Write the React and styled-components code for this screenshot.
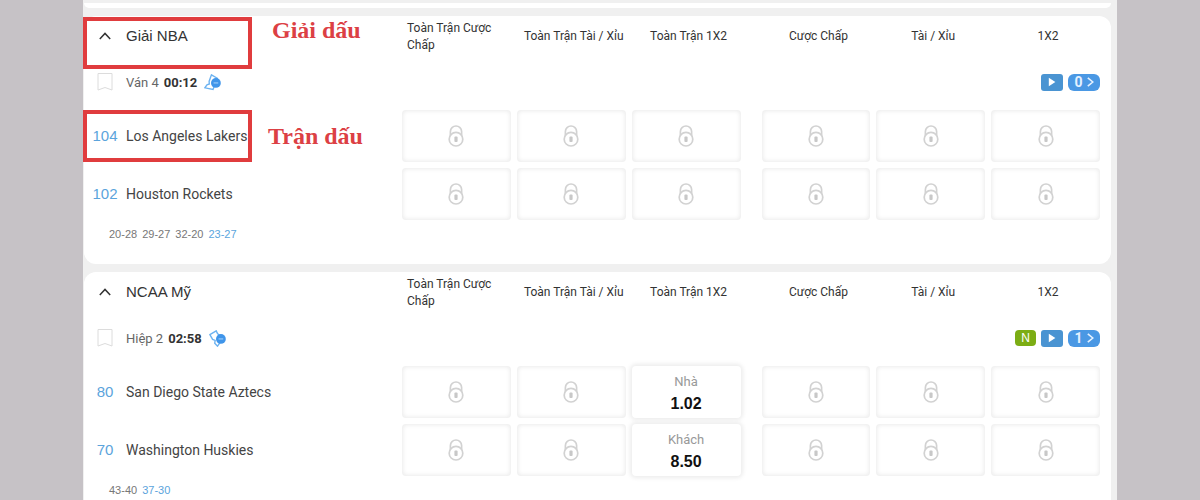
import styled, { createGlobalStyle } from "styled-components";

const COLUMNS = [
	["Toàn Trận Cược Chấp", "Toàn Trận Tài / Xỉu", "Toàn Trận 1X2"],
	["Cược Chấp", "Tài / Xỉu", "1X2"],
];

const LEAGUES = [
	{
		name: "Giải NBA",
		note: "Giải dấu",
		period: "Ván 4",
		clock: "00:12",
		ticket: "up",
		neutral: false,
		more: 0,
		teams: [
			{ points: 104, name: "Los Angeles Lakers", note: "Trận dấu", odds: {} },
			{ points: 102, name: "Houston Rockets", odds: {} },
		],
		scores: ["20-28", "29-27", "32-20", "23-27"],
	},
	{
		name: "NCAA Mỹ",
		period: "Hiệp 2",
		clock: "02:58",
		ticket: "down",
		neutral: true,
		more: 1,
		teams: [
			{ points: 80, name: "San Diego State Aztecs", odds: { "Toàn Trận 1X2": ["Nhà", "1.02"] } },
			{ points: 70, name: "Washington Huskies", odds: { "Toàn Trận 1X2": ["Khách", "8.50"] } },
		],
		scores: ["43-40", "37-30"],
	},
];

const ChevronUp = () => (
	<svg width="12" height="8" viewBox="0 0 12 8" fill="none" stroke="#333" strokeWidth="1.5">
		<path d="M0.8 7 L6 1.4 L11.2 7" />
	</svg>
);

const Bookmark = () => (
	<svg width="16" height="18" viewBox="0 0 16 18" fill="none" stroke="#dcdcdc">
		<path d="M1 0.5 H15 V17 L8 14.5 L1 17 Z" />
	</svg>
);

const Ticket = ({ direction }) => (
	<svg width="17" height="17" viewBox="0 0 16 16" fill="none" stroke="#6cb2f0" strokeWidth="1.3">
		{direction === "up" ? (
			<path d="M7 0.8 L12.5 4 L8.5 14.6 L0.8 13 L2.8 10.2 L5 9.4 L4.8 7 Z" />
		) : (
			<path d="M0.8 4.4 L6.8 0.8 L8 3.4 L13 8 L8 15.2 L5.4 12.4 L5.8 9.8 L3.4 8.8 Z" />
		)}
		<circle cx="11.2" cy="8.4" r="4.6" fill="#3f95ea" stroke="none" />
		<path d="M9 8.4 H13.4" stroke="#8cc3f7" strokeWidth="1.3" />
	</svg>
);

const Lock = () => (
	<svg width="16" height="22" viewBox="0 0 16 22" fill="none" stroke="#d2d2d2" strokeWidth="1.7">
		<path d="M2.4 10.5 V6.4 A5.6 5.4 0 0 1 13.6 6.4 V10.5" />
		<circle cx="8" cy="14.2" r="6.8" />
		<rect x="6.4" y="11.4" width="3.2" height="5.6" rx="1" fill="#c8c8c8" stroke="none" />
	</svg>
);

const Market = ({ label, team, odds }) =>
	odds ? (
		<LiveOdds type="button" aria-label={`${team} ${label}`}>
			<OddsSide>{odds[0]}</OddsSide>
			<OddsValue>{odds[1]}</OddsValue>
		</LiveOdds>
	) : (
		<LockedOdds type="button" disabled aria-label={`${team} ${label}`}>
			<Lock />
		</LockedOdds>
	);

const League = ({ league }) => (
	<Card>
		<Row>
			<Info>
				<Toggle type="button" aria-label={league.name} aria-expanded="true">
					<ChevronUp />
				</Toggle>
				<LeagueName>{league.name}</LeagueName>
			</Info>
			<Markets>
				{COLUMNS.map((group) => (
					<Group key={group[0]}>
						{group.map((label) => (
							<ColumnTitle key={label}>
								<span>{label}</span>
							</ColumnTitle>
						))}
					</Group>
				))}
			</Markets>
			{league.note && (
				<Marker $top="1px">
					<Note>{league.note}</Note>
				</Marker>
			)}
		</Row>

		<StatusRow>
			<Toggle type="button" aria-label="Bookmark">
				<Bookmark />
			</Toggle>
			<Period>
				{league.period}
				<strong>{league.clock}</strong>
			</Period>
			<Ticket direction={league.ticket} />
			<Badges>
				{league.neutral && <NeutralBadge>N</NeutralBadge>}
				<PlayButton type="button" aria-label="Play">
					<svg width="8" height="10" viewBox="0 0 8 10" fill="#fff">
						<path d="M0.8 0.8 L7.4 5 L0.8 9.2 Z" />
					</svg>
				</PlayButton>
				<MoreButton type="button">
					{league.more}
					<svg width="7" height="10" viewBox="0 0 7 10" fill="none" stroke="#e4f1ff" strokeWidth="1.6">
						<path d="M0.8 0.8 L5.8 5 L0.8 9.2" />
					</svg>
				</MoreButton>
			</Badges>
		</StatusRow>

		<Teams>
			{league.teams.map((team) => (
				<Row key={team.name}>
					<Info>
						<Points>{team.points}</Points>
						<TeamName>{team.name}</TeamName>
					</Info>
					<Markets>
						{COLUMNS.map((group) => (
							<Group key={group[0]}>
								{group.map((label) => (
									<Market key={label} label={label} team={team.name} odds={team.odds[label]} />
								))}
							</Group>
						))}
					</Markets>
					{team.note && (
						<Marker $top="0">
							<Note $low>{team.note}</Note>
						</Marker>
					)}
				</Row>
			))}
		</Teams>

		<Scores>
			{league.scores.map((score, i) => (
				<Score key={score} $current={i === league.scores.length - 1}>
					{score}
				</Score>
			))}
		</Scores>
	</Card>
);

const App = () => (
	<>
		<GlobalStyle />
		<Page>
			<PreviousCard />
			{LEAGUES.map((league) => (
				<League key={league.name} league={league} />
			))}
		</Page>
	</>
);

const GlobalStyle = createGlobalStyle`
	* {
		box-sizing: border-box;
	}
	body {
		margin: 0;
		padding: 0 83px;
		background: #c6c2c6;
		font-family: "Liberation Sans", Arial, sans-serif;
	}
	button {
		font-family: inherit;
		border: none;
		padding: 0;
		cursor: pointer;
	}
	svg {
		flex: none;
		display: block;
	}
`;

const Page = styled.main`
	display: flex;
	flex-direction: column;
	gap: 8px;
	min-height: 100vh;
	padding: 3px 6px 8px 1px;
	background: #f0f0f0;
`;

const PreviousCard = styled.div`
	height: 5px;
	background: #fff;
	border-radius: 0 0 12px 12px;
`;

const Card = styled.section`
	padding: 0 11px 16px 0;
	background: #fff;
	border-radius: 12px;
`;

const Row = styled.div`
	position: relative;
	display: flex;
	min-height: 40px;
`;

const Info = styled.div`
	display: flex;
	align-items: center;
	width: 318px;
	flex: none;
	padding-bottom: 1px;
`;

const Toggle = styled.button`
	display: flex;
	justify-content: center;
	width: 42px;
	flex: none;
	background: none;
`;

const LeagueName = styled.h2`
	margin: 0;
	font-size: 15px;
	font-weight: 400;
	color: #333;
`;

const Markets = styled.div`
	flex: 1;
	display: grid;
	grid-template-columns: 1fr 1fr;
	gap: 21px;
`;

const Group = styled.div`
	display: grid;
	grid-template-columns: repeat(3, 1fr);
	gap: 6px;
`;

const ColumnTitle = styled.div`
	display: flex;
	align-items: center;
	justify-content: center;
	padding: 1px 0 0 5px;
	font-family: Roboto, sans-serif;
	font-size: 12px;
	line-height: 17px;
	color: #333;
`;

const StatusRow = styled.div`
	display: flex;
	align-items: center;
	height: 54px;
	padding-bottom: 2px;
`;

const Period = styled.span`
	display: flex;
	gap: 5px;
	margin-right: 7px;
	font-family: Roboto, sans-serif;
	font-size: 13px;
	color: #666;

	strong {
		color: #333;
	}
`;

const Badges = styled.div`
	display: flex;
	align-items: center;
	gap: 5px;
	margin-left: auto;
`;

const NeutralBadge = styled.span`
	width: 21px;
	border-radius: 4px;
	background: #7cad14;
	color: #fff;
	font-size: 12px;
	line-height: 16px;
	text-align: center;
`;

const PlayButton = styled.button`
	display: flex;
	align-items: center;
	justify-content: center;
	width: 22px;
	height: 17px;
	border-radius: 3px;
	background: #4a94d2;
`;

const MoreButton = styled.button`
	display: flex;
	align-items: center;
	justify-content: center;
	gap: 4px;
	width: 32px;
	height: 17px;
	border-radius: 6px;
	background: #4a98e4;
	color: #e4f1ff;
	font-family: Roboto, sans-serif;
	font-size: 14px;
	font-weight: 700;
`;

const Teams = styled.div`
	display: grid;
	grid-auto-rows: 52px;
	gap: 6px;
`;

const Points = styled.span`
	width: 42px;
	font-size: 15px;
	color: #5ba4dc;
	text-align: center;
`;

const TeamName = styled.span`
	font-family: Roboto, sans-serif;
	font-size: 14px;
	color: #444;
`;

const LockedOdds = styled.button`
	display: flex;
	align-items: center;
	justify-content: center;
	border-radius: 4px;
	background: #fff;
	box-shadow: inset 0 0 4px 1px #ebebeb;
`;

const LiveOdds = styled.button`
	display: flex;
	flex-direction: column;
	align-items: center;
	justify-content: center;
	gap: 2px;
	padding-top: 2px;
	border-radius: 4px;
	background: #fff;
	box-shadow: 0 0 4px 2px #ececec;
`;

const OddsSide = styled.span`
	font-family: Roboto, sans-serif;
	font-size: 13px;
	line-height: 20px;
	color: #999;
`;

const OddsValue = styled.span`
	font-size: 16px;
	line-height: 20px;
	font-weight: 700;
	color: #111;
`;

const Scores = styled.div`
	display: flex;
	align-items: center;
	gap: 5px;
	height: 28px;
	padding-left: 25px;
`;

const Score = styled.span`
	font-size: 11px;
	color: ${(props) => (props.$current ? "#5ba4dc" : "#777")};
`;

// Red frame drawn over a row, with its caption hanging off the right side
const Marker = styled.div`
	position: absolute;
	top: ${(props) => props.$top};
	left: -1px;
	width: 169px;
	height: 52px;
	border: 4px solid #e03c3e;
	pointer-events: none;
`;

const Note = styled.span`
	position: absolute;
	top: ${(props) => (props.$low ? "8px" : "-5px")};
	left: ${(props) => (props.$low ? "181px" : "185px")};
	font-family: "Liberation Serif", "Times New Roman", serif;
	font-size: 24px;
	line-height: 28px;
	font-weight: 700;
	color: #dc4044;
	white-space: nowrap;
`;

export default App;
